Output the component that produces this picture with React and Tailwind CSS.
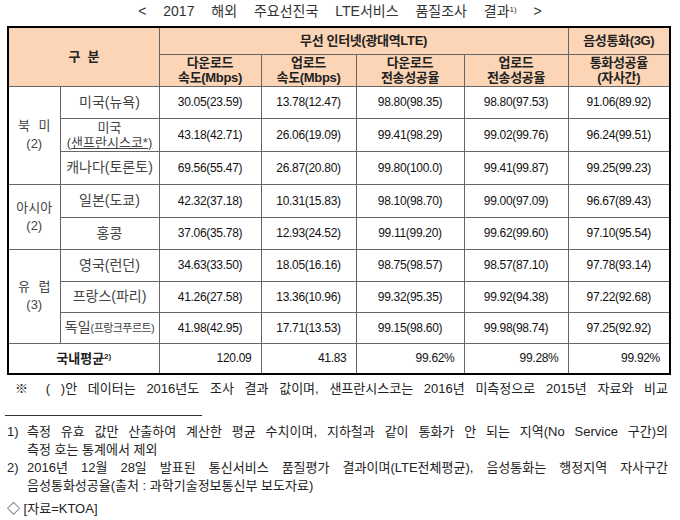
const rows = [
  { region: ["북 미", "(2)"], span: 3, name: "미국(뉴욕)", h: "h-[32px]", vals: ["30.05(23.59)", "13.78(12.47)", "98.80(98.35)", "98.80(97.53)", "91.06(89.92)"] },
  { name: "sf", h: "h-[33px]", vals: ["43.18(42.71)", "26.06(19.09)", "99.41(98.29)", "99.02(99.76)", "96.24(99.51)"] },
  { name: "캐나다(토론토)", h: "h-[33px]", vals: ["69.56(55.47)", "26.87(20.80)", "99.80(100.0)", "99.41(99.87)", "99.25(99.23)"] },
  { region: ["아시아", "(2)"], span: 2, name: "일본(도쿄)", h: "h-[33px]", vals: ["42.32(37.18)", "10.31(15.83)", "98.10(98.70)", "99.00(97.09)", "96.67(89.43)"] },
  { name: "홍콩", h: "h-[32px]", vals: ["37.06(35.78)", "12.93(24.52)", "99.11(99.20)", "99.62(99.60)", "97.10(95.54)"] },
  { region: ["유 럽", "(3)"], span: 3, name: "영국(런던)", h: "h-[32px]", vals: ["34.63(33.50)", "18.05(16.16)", "98.75(98.57)", "98.57(87.10)", "97.78(93.14)"] },
  { name: "프랑스(파리)", h: "h-[31px]", vals: ["41.26(27.58)", "13.36(10.96)", "99.32(95.35)", "99.92(94.38)", "97.22(92.68)"] },
  { name: "de", h: "h-[31px]", vals: ["41.98(42.95)", "17.71(13.53)", "99.15(98.60)", "99.98(98.74)", "97.25(92.92)"] },
];

const cell = "border border-[#666] p-0 text-center align-middle";
const head = cell + " bg-[#fbd5b6] text-[13px] leading-[15px] font-semibold tracking-tight text-[#222]";

function Country({ name }) {
  if (name === "sf") {
    return (
      <div className="text-[13px] leading-[15px] text-[#444]">
        미국
        <br />
        <span className="underline underline-offset-1">(샌프란시스코*)</span>
      </div>
    );
  }
  if (name === "de") {
    return (
      <div className="text-[14px] text-[#444] whitespace-nowrap">
        독일<span className="text-[11px] tracking-tighter">(프랑크푸르트)</span>
      </div>
    );
  }
  return <div className="text-[14px] text-[#444]">{name}</div>;
}

export default function App() {
  return (
    <div className="w-[680px] h-[520px] bg-white text-[#222] font-['Liberation_Sans','Noto_Sans_CJK_KR',sans-serif]">
      {/* title */}
      <div className="h-[26px] pt-[3px] text-center text-[14px] leading-[17px] text-[#333] [word-spacing:13px]">
        &lt; 2017 해외 주요선진국 LTE서비스 품질조사 결과<sup className="text-[8px]">1)</sup> &gt;
      </div>

      <div className="pl-[7px]">
        <table className="table-fixed border-collapse border-2 border-black w-[662px]">
          <colgroup>
            <col className="w-[52px]" />
            <col className="w-[99px]" />
            <col className="w-[102px]" />
            <col className="w-[95px]" />
            <col className="w-[108px]" />
            <col className="w-[104px]" />
            <col className="w-[102px]" />
          </colgroup>
          <thead>
            <tr className="h-[27px]">
              <th colSpan={2} rowSpan={2} className={head + " font-normal [word-spacing:4px]"}>
                구 분
              </th>
              <th colSpan={4} className={head}>
                무선 인터넷(광대역LTE)
              </th>
              <th className={head}>음성통화(3G)</th>
            </tr>
            <tr className="h-[32px]">
              <th className={head}>
                다운로드
                <br />
                속도(Mbps)
              </th>
              <th className={head}>
                업로드
                <br />
                속도(Mbps)
              </th>
              <th className={head}>
                다운로드
                <br />
                전송성공율
              </th>
              <th className={head}>
                업로드
                <br />
                전송성공율
              </th>
              <th className={head}>
                통화성공율
                <br />
                (자사간)
              </th>
            </tr>
          </thead>
          <tbody>
            {rows.map((r, i) => (
              <tr key={i} className={r.h}>
                {r.region && (
                  <td rowSpan={r.span} className={cell + " text-[13px] leading-[18px] text-[#444]"}>
                    <div className="[word-spacing:5px]">{r.region[0]}</div>
                    <div>{r.region[1]}</div>
                  </td>
                )}
                <td className={cell}>
                  <Country name={r.name} />
                </td>
                {r.vals.map((v, j) => (
                  <td key={j} className={cell + " text-[12px] tracking-tight text-[#111]"}>
                    {v}
                  </td>
                ))}
              </tr>
            ))}
            <tr className="h-[31px]">
              <td colSpan={2} className={cell + " text-[13px] font-bold text-[#222]"}>
                국내평균<sup className="text-[8px]">2)</sup>
              </td>
              {["120.09", "41.83", "99.62%", "99.28%", "99.92%"].map((v, j) => (
                <td key={j} className={cell + " text-right pr-[9px] text-[12px] tracking-tight text-[#111]"}>
                  {v}
                </td>
              ))}
            </tr>
          </tbody>
        </table>
      </div>

      {/* notes */}
      <div className="mt-[5px] ml-[15px] w-[653px] text-[13px] leading-[18px] text-justify [text-align-last:justify]">
        ※ ( )안 데이터는 2016년도 조사 결과 값이며, 샌프란시스코는 2016년 미측정으로 2015년 자료와 비교
      </div>
      <div className="mt-[17px] ml-[5px] w-[197px] border-t border-[#333]" />

      <div className="mt-[7px] ml-[7px] w-[661px] text-[13px] leading-[18px] text-[#222]">
        <div className="flex">
          <span className="w-[20px] shrink-0">1)</span>
          <span className="flex-1 text-justify [text-align-last:justify]">
            측정 유효 값만 산출하여 계산한 평균 수치이며, 지하철과 같이 통화가 안 되는 지역(No Service 구간)의
          </span>
        </div>
        <div className="pl-[20px]">측정 호는 통계에서 제외</div>
        <div className="flex">
          <span className="w-[20px] shrink-0">2)</span>
          <span className="flex-1 text-justify [text-align-last:justify]">
            2016년 12월 28일 발표된 통신서비스 품질평가 결과이며(LTE전체평균), 음성통화는 행정지역 자사구간
          </span>
        </div>
        <div className="pl-[20px]">음성통화성공율(출처 : 과학기술정보통신부 보도자료)</div>
        <div className="mt-[5px]">◇ [자료=KTOA]</div>
      </div>
    </div>
  );
}
